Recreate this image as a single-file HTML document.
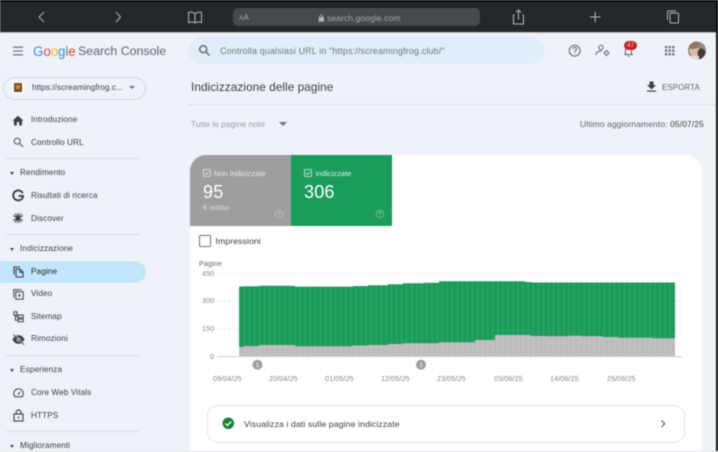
<!DOCTYPE html>
<html lang="it">
<head>
<meta charset="utf-8">
<title>Indicizzazione delle pagine</title>
<style>
html,body{margin:0;padding:0;width:718px;height:452px;overflow:hidden;background:#eff3f9;font-family:"Liberation Sans",sans-serif;}
#root{position:relative;width:718px;height:452px;overflow:hidden;filter:blur(.45px);}
.a{position:absolute;white-space:nowrap;}
svg.a{overflow:visible;}
.nav{font-size:8.2px;color:#3c4043;letter-spacing:.1px;left:31px;line-height:12px;}
.sec{font-size:8.2px;color:#3c4043;letter-spacing:.12px;left:20px;line-height:12px;}
.hr{position:absolute;left:6px;width:133px;height:1px;background:#d9dde2;}
.tri{position:absolute;left:10px;width:0;height:0;border-left:2.5px solid transparent;border-right:2.5px solid transparent;border-top:3px solid #444;}
.ax{font-size:7.2px;color:#80868b;letter-spacing:.1px;line-height:10px;}
</style>
</head>
<body>
<div id="root">

<!-- Safari bar -->
<div class="a" style="left:0;top:0;width:718px;height:2px;background:#070707"></div>
<div class="a" style="left:0;top:2px;width:718px;height:30px;background:#23262b"></div>
<div class="a" style="left:0;top:32px;width:718px;height:1px;background:#b9bcc0"></div>
<svg class="a" style="left:0;top:0" width="718" height="32" fill="none" stroke="#b4b6b9" stroke-width="1">
  <path d="M44 12 L39 17 L44 22"/>
  <path d="M116 12 L120.500 17 L116 22"/>
  <path d="M195 13.500 C192 11.800 190 12 188.500 12.500 V22.500 C190.500 21.800 193 21.800 195 23 C197 21.800 199.500 21.800 201.500 22.500 V12.500 C200 12 198 11.800 195 13.500 Z M195 13.500 V23"/>
  <path d="M514.500 15 H513.500 V24 H523.500 V15 H522.500 M518.500 19.500 V10 M516 12.500 L518.500 10 L521 12.500"/>
  <path d="M590 17 H600.500 M595.200 11.800 V22.300" stroke-width="1.100"/>
  <path d="M667.500 20 V12 Q667.500 11 668.500 11 H676 M670 23 V14 Q670 13 671 13 H677.500 Q678.500 13 678.500 14 V22 Q678.500 23 677.500 23 H671 Q670 23 670 22 Z"/>
  <path d="M473.500 13.500 A4.700 4.700 0 1 0 475.800 17.500 M471.500 10.800 L474 13.500 L471 15" stroke-width=".9"/>
</svg>
<div class="a" style="left:233px;top:8px;width:247px;height:18px;border-radius:5px;background:#45484d"></div>
<div class="a" style="left:239px;top:12px;font-size:7.8px;line-height:11px;color:#a9abae;letter-spacing:.3px"><span style="font-size:6.5px">A</span>A</div>
<svg class="a" style="left:318px;top:13.500px" width="7" height="8"><path d="M1 3.500h4.600v3.800H1zM1.900 3.500V2.500a1.400 1.400 0 0 1 2.800 0V3.500" fill="none" stroke="#b3b5b8" stroke-width=".7"/><rect x="1" y="3.500" width="4.600" height="3.800" fill="#b3b5b8"/></svg>
<div class="a" style="left:327px;top:11.500px;font-size:8.500px;line-height:12px;color:#a6a8ab;letter-spacing:.1px">search.google.com</div>

<!-- Header -->
<svg class="a" style="left:12px;top:46px" width="12" height="10"><path d="M1 1.200H11M1 5H11M1 8.800H11" stroke="#5f6368" stroke-width="1.100"/></svg>
<div class="a" style="left:33px;top:43px;font-size:13.400px;line-height:17px;letter-spacing:-.1px"><span style="color:#4285f4">G</span><span style="color:#ea4335">o</span><span style="color:#fbbc05">o</span><span style="color:#4285f4">g</span><span style="color:#34a853">l</span><span style="color:#ea4335">e</span></div>
<div class="a" style="left:78px;top:43px;font-size:12.400px;line-height:17px;color:#5f6368;letter-spacing:0">Search Console</div>
<div class="a" style="left:188px;top:37px;width:357px;height:27px;border-radius:14px;background:#e2edfa"></div>
<svg class="a" style="left:198px;top:44px" width="13" height="13" fill="none" stroke="#5f6368" stroke-width="1.400"><circle cx="5.200" cy="5.200" r="3.500"/><path d="M8 8l3.500 3.500"/></svg>
<div class="a" style="left:220px;top:44.500px;font-size:8.900px;line-height:12px;color:#70757a;letter-spacing:.18px">Controlla qualsiasi URL in "https://screamingfrog.club/"</div>

<svg class="a" style="left:566px;top:41px" width="140" height="24" fill="none" stroke="#5f6368" stroke-width="1">
  <circle cx="8.700" cy="9.700" r="5.400"/>
  <path d="M6.900 8.200c0-2.400 3.700-2.400 3.700-.2 0 1.500-1.800 1.400-1.800 2.900M8.800 11.800v1"/>
  <circle cx="35" cy="6.500" r="2.200"/>
  <path d="M30 14v-1c0-2 3-3 5.500-2.800"/>
  <circle cx="40.500" cy="12" r="1.900"/>
  <path d="M40.500 8.900v1M40.500 14.100v1M37.500 12h1M42.500 12h1" stroke-width=".9"/>
  <path d="M58 13.500h9M59.500 13v-4.500c0-2 1.200-3.300 3-3.300s3 1.300 3 3.300V13M61.500 15.300h2"/>
</svg>
<div class="a" style="left:624px;top:41px;width:13px;height:9px;border-radius:5px;background:#c5221f;color:#f5c6c4;font-size:6.500px;line-height:9px;text-align:center">47</div>
<svg class="a" style="left:665px;top:46px" width="10" height="10" fill="#5f6368"><rect x="0" y="0" width="2.200" height="2.200"/><rect x="3.600" y="0" width="2.200" height="2.200"/><rect x="7.200" y="0" width="2.200" height="2.200"/><rect x="0" y="3.600" width="2.200" height="2.200"/><rect x="3.600" y="3.600" width="2.200" height="2.200"/><rect x="7.200" y="3.600" width="2.200" height="2.200"/><rect x="0" y="7.200" width="2.200" height="2.200"/><rect x="3.600" y="7.200" width="2.200" height="2.200"/><rect x="7.200" y="7.200" width="2.200" height="2.200"/></svg>
<svg class="a" style="left:688px;top:41px" width="18" height="19">
  <defs><clipPath id="av"><circle cx="9" cy="9.500" r="9"/></clipPath></defs>
  <g clip-path="url(#av)">
    <rect width="18" height="19" fill="#9d8a78"/>
    <ellipse cx="6.500" cy="10" rx="5" ry="5.500" fill="#d9bfae"/>
    <ellipse cx="5" cy="4" rx="7" ry="4" fill="#8f7a66"/>
    <ellipse cx="13.500" cy="12" rx="4" ry="4.500" fill="#4a3a33"/>
    <rect x="2" y="15" width="9" height="5" fill="#e3dcd6"/>
    <rect x="11" y="16" width="8" height="4" fill="#2d2a2a"/>
  </g>
</svg>

<!-- Property selector -->
<div class="a" style="left:2.500px;top:76.500px;width:141.500px;height:21px;border:1px solid #d3d7dc;border-radius:12px"></div>
<div class="a" style="left:12px;top:81px;width:12px;height:13px;background:#fff"></div>
<div class="a" style="left:14px;top:83px;width:8px;height:9px;background:#7a4b1e"></div>
<div class="a" style="left:16px;top:85px;width:4px;height:4px;background:#c98a2d"></div>
<div class="a" style="left:32px;top:81.500px;font-size:8.200px;line-height:12px;color:#3c4043;letter-spacing:.05px">https://screamingfrog.c...</div>
<div class="a" style="left:128.500px;top:86px;width:0;height:0;border-left:3px solid transparent;border-right:3px solid transparent;border-top:3px solid #70757a"></div>

<!-- Sidebar -->
<div class="a" style="left:0;top:261px;width:146px;height:22px;background:#c2e6fb;border-radius:0 11px 11px 0"></div>

<svg class="a" style="left:12px;top:115px" width="12" height="11"><path d="M6 .8L11.500 5.800H10V10.500H7.200V7H4.800V10.500H2V5.800H.5Z" fill="#3c4043"/></svg>
<div class="a nav" style="top:114px">Introduzione</div>
<svg class="a" style="left:13px;top:137px" width="11" height="11" fill="none" stroke="#5f6368" stroke-width="1.200"><circle cx="4.200" cy="4.200" r="3"/><path d="M6.500 6.500L10 10"/></svg>
<div class="a nav" style="top:136.500px">Controllo URL</div>
<div class="hr" style="top:158px"></div>
<div class="tri" style="top:172px"></div>
<div class="a sec" style="top:167px">Rendimento</div>
<svg class="a" style="left:12px;top:190px" width="12" height="12"><path d="M10.800 3.300A5 5 0 1 0 11 7V5.900H6.400" fill="none" stroke="#3c4043" stroke-width="1.900"/></svg>
<div class="a nav" style="top:190px">Risultati di ricerca</div>
<svg class="a" style="left:12px;top:212px" width="12" height="12" stroke="#3c4043" stroke-width="1.500" fill="none"><path d="M6 1V11M1.200 3.500L10.800 8.500M1.200 8.500L10.800 3.500M3 1.500L9 10.500M9 1.500L3 10.500" stroke-width="1.100"/><circle cx="6" cy="6" r="2.300" fill="#3c4043" stroke="none"/></svg>
<div class="a nav" style="top:212.500px">Discover</div>
<div class="hr" style="top:234px"></div>
<div class="tri" style="top:248px"></div>
<div class="a sec" style="top:243px">Indicizzazione</div>
<svg class="a" style="left:13px;top:266px" width="11" height="12" fill="none" stroke="#3c4043" stroke-width="1.100"><path d="M1 8.500V1H7M3 3H7L10 6V11H3Z"/><path d="M6.800 3V6.300H10" /></svg>
<div class="a nav" style="top:265.500px;color:#202124">Pagine</div>
<svg class="a" style="left:13px;top:289px" width="11" height="11" fill="none" stroke="#3c4043" stroke-width="1"><path d="M.8 8.500V.8H8.500"/><rect x="2.800" y="2.800" width="7.400" height="7.400"/><path d="M5.500 4.800L8 6.500L5.500 8.200Z" fill="#3c4043" stroke="none"/></svg>
<div class="a nav" style="top:288px">Video</div>
<svg class="a" style="left:13px;top:311px" width="11" height="12" fill="none" stroke="#3c4043" stroke-width="1"><rect x=".8" y=".8" width="3.200" height="3.200"/><path d="M2.400 4V9.300H5M2.400 5.600H5"/><rect x="5.200" y="4" width="5" height="2.800"/><rect x="5.200" y="8" width="5" height="2.800"/></svg>
<div class="a nav" style="top:310.500px">Sitemap</div>
<svg class="a" style="left:12px;top:334px" width="13" height="11" fill="#3c4043"><path d="M.5 5.500C2 2.500 4 1.200 6.500 1.200S11 2.500 12.500 5.500C11 8.500 9 9.800 6.500 9.800S2 8.500 .5 5.500Z"/><circle cx="6.500" cy="5.500" r="1.800" fill="#eff3f9"/><path d="M2 .8L11.500 10.300" stroke="#eff3f9" stroke-width="1.800"/><path d="M1.500 .6L12 10.800" stroke="#3c4043" stroke-width="1"/></svg>
<div class="a nav" style="top:333px">Rimozioni</div>
<div class="hr" style="top:355px"></div>
<div class="tri" style="top:369px"></div>
<div class="a sec" style="top:364px">Esperienza</div>
<svg class="a" style="left:13px;top:388px" width="11" height="10" fill="none" stroke="#3c4043" stroke-width="1"><path d="M2 8.800A4.800 4.800 0 1 1 9 8.800Z"/><path d="M5 6.500L7.200 3.800"/></svg>
<div class="a nav" style="top:387px">Core Web Vitals</div>
<svg class="a" style="left:13px;top:409px" width="11" height="13" fill="none" stroke="#3c4043" stroke-width="1.100"><rect x="1" y="5" width="9" height="7"/><path d="M3.200 5V3.200a2.300 2.300 0 0 1 4.600 0V5"/><circle cx="5.500" cy="8.500" r=".9" fill="#3c4043" stroke="none"/></svg>
<div class="a nav" style="top:409.500px">HTTPS</div>
<div class="hr" style="top:431px"></div>
<div class="tri" style="top:445px"></div>
<div class="a sec" style="top:440px">Miglioramenti</div>

<!-- Title row -->
<div class="a" style="left:191px;top:80px;font-size:11.800px;line-height:15px;color:#3c4043;letter-spacing:.05px">Indicizzazione delle pagine</div>
<div class="a" style="left:188px;top:104px;width:530px;height:1px;background:#dde1e6"></div>
<svg class="a" style="left:646px;top:81px" width="11" height="12" fill="#3c4043"><path d="M3.500 .5H7.500V4H10L5.500 8.500L1 4H3.500Z"/><rect x="1" y="9.500" width="9" height="1.200"/></svg>
<div class="a" style="left:662px;top:81.500px;font-size:7.800px;line-height:11px;color:#5f6368;letter-spacing:.2px">ESPORTA</div>

<div class="a" style="left:191px;top:117.500px;font-size:8.300px;line-height:12px;color:#9aa0a6;letter-spacing:.05px">Tutte le pagine note</div>
<div class="a" style="left:279px;top:121.500px;width:0;height:0;border-left:4px solid transparent;border-right:4px solid transparent;border-top:4px solid #70757a"></div>
<div class="a" style="left:580px;top:117.500px;font-size:8.500px;line-height:12px;color:#5f6368;letter-spacing:.1px">Ultimo aggiornamento: <span style="color:#3c4043">05/07/25</span></div>

<!-- Card -->
<div class="a" style="left:190px;top:155px;width:512px;height:300px;background:#fff;border-radius:16px 16px 0 0;overflow:hidden">
  <div class="a" style="left:0;top:0;width:101px;height:71px;background:#9e9e9e"></div>
  <div class="a" style="left:101px;top:0;width:101px;height:71px;background:#1a9c5b"></div>
</div>
<svg class="a" style="left:203px;top:169px" width="9" height="9" fill="none" stroke="#e6e6e6" stroke-width=".8"><rect x=".5" y=".5" width="7" height="7" rx=".8"/><path d="M2 4.200L3.500 5.600L6 2.600"/></svg>
<div class="a" style="left:214px;top:167.500px;font-size:7.500px;line-height:11px;color:#ececec;letter-spacing:.05px">Non indicizzate</div>
<div class="a" style="left:203px;top:182px;font-size:18px;line-height:20px;color:#fff;letter-spacing:.2px">95</div>
<div class="a" style="left:203px;top:203px;font-size:7.200px;line-height:10px;color:#e6e6e6;letter-spacing:.2px">6 motivi</div>
<svg class="a" style="left:274px;top:209px" width="10" height="10" fill="none" stroke="#c8c8c8" stroke-width=".7"><circle cx="5" cy="5" r="3.800"/><path d="M3.800 4c0-1.500 2.400-1.500 2.400 0 0 1-1.200 1-1.200 2M5 6.800v.6"/></svg>

<svg class="a" style="left:304px;top:169px" width="9" height="9" fill="none" stroke="#e6f5ec" stroke-width=".8"><rect x=".5" y=".5" width="7" height="7" rx=".8"/><path d="M2 4.200L3.500 5.600L6 2.600"/></svg>
<div class="a" style="left:315.500px;top:167.500px;font-size:7.500px;line-height:11px;color:#e3f3ea;letter-spacing:.05px">Indicizzate</div>
<div class="a" style="left:304px;top:182px;font-size:18px;line-height:20px;color:#fff;letter-spacing:.2px">306</div>
<svg class="a" style="left:375px;top:209px" width="10" height="10" fill="none" stroke="#8fd0ac" stroke-width=".7"><circle cx="5" cy="5" r="3.800"/><path d="M3.800 4c0-1.500 2.400-1.500 2.400 0 0 1-1.200 1-1.200 2M5 6.800v.6"/></svg>

<!-- Impressions -->
<div class="a" style="left:199px;top:235px;width:10px;height:10px;border:1.200px solid #6b6f73;border-radius:1.500px"></div>
<div class="a" style="left:215.500px;top:235px;font-size:8.700px;line-height:12px;color:#3c4043;letter-spacing:.08px">Impressioni</div>

<!-- Chart labels -->
<div class="a ax" style="left:199px;top:259px;color:#5f6368">Pagine</div>
<div class="a ax" style="left:202px;top:268.500px">450</div>
<div class="a ax" style="left:202px;top:296px">300</div>
<div class="a ax" style="left:202px;top:323.500px">150</div>
<div class="a ax" style="left:210px;top:351.500px">0</div>

<!-- Chart -->
<svg class="a" style="left:0;top:0" width="718" height="452">
  <path d="M217 273.500H682M217 301H682M217 329H682" stroke="#eceef0" stroke-width=".8"/>
  <path d="M217 356.700H239M675 356.700H682" stroke="#c8cacc" stroke-width=".9"/>
  <path fill="#1a9b5a" d="M239 356.500V286.500H244V286.200H259V285.800H295V286.600H353V286H368V285.300H388V284.300H403V283.300H424V282.700H439V281.300H525V282H532V282.500H675V356.500Z"/>
  <path fill="#bdbdbd" d="M239 356.700V347H244V346H259V345H295V346.200H352V345.500H368V345H388V344H403V343.300H439V342.300H475V340H495V335H531V336H547V336.300H567V335.700H582V336.300H603V337H618V337.700H653V338.300H675V356.700Z"/>
  <line x1="239" y1="320" x2="675" y2="320" stroke="#fff" stroke-opacity=".2" stroke-width="76" stroke-dasharray=".6 4.470"/>
  <circle cx="257.500" cy="364.700" r="5" fill="#9e9e9e"/>
  <circle cx="421" cy="364.700" r="5" fill="#9e9e9e"/>
  <text x="257.500" y="367.200" text-anchor="middle" font-size="6.500" fill="#fff" font-family="Liberation Sans, sans-serif">1</text>
  <text x="421" y="367.200" text-anchor="middle" font-size="6.500" fill="#fff" font-family="Liberation Sans, sans-serif">1</text>
</svg>
<div class="a ax" style="left:213px;top:373.500px">09/04/25</div>
<div class="a ax" style="left:269px;top:373.500px">20/04/25</div>
<div class="a ax" style="left:325px;top:373.500px">01/05/25</div>
<div class="a ax" style="left:381px;top:373.500px">12/05/25</div>
<div class="a ax" style="left:437px;top:373.500px">23/05/25</div>
<div class="a ax" style="left:494px;top:373.500px">03/06/25</div>
<div class="a ax" style="left:550px;top:373.500px">14/06/25</div>
<div class="a ax" style="left:607px;top:373.500px">25/06/25</div>

<!-- Row -->
<div class="a" style="left:207px;top:405px;width:476px;height:35.500px;border:1px solid #e3e5e8;border-radius:11px"></div>
<svg class="a" style="left:222px;top:417px" width="13" height="13"><circle cx="6.300" cy="6.300" r="5.800" fill="#188038"/><path d="M3.500 6.500L5.500 8.400L9.200 4.500" fill="none" stroke="#fff" stroke-width="1.300"/></svg>
<div class="a" style="left:244px;top:417.500px;font-size:8.700px;line-height:12px;color:#3c4043;letter-spacing:.1px">Visualizza i dati sulle pagine indicizzate</div>
<svg class="a" style="left:660px;top:419px" width="7" height="10" fill="none" stroke="#5f6368" stroke-width="1.200"><path d="M1.500 1.500L4.800 4.800L1.500 8"/></svg>

<!-- Edges -->
<div class="a" style="left:716px;top:0;width:2px;height:452px;background:#0a0a0a"></div>
<div class="a" style="left:0;top:451px;width:718px;height:1px;background:#e6e8eb"></div>

</div>
</body>
</html>
